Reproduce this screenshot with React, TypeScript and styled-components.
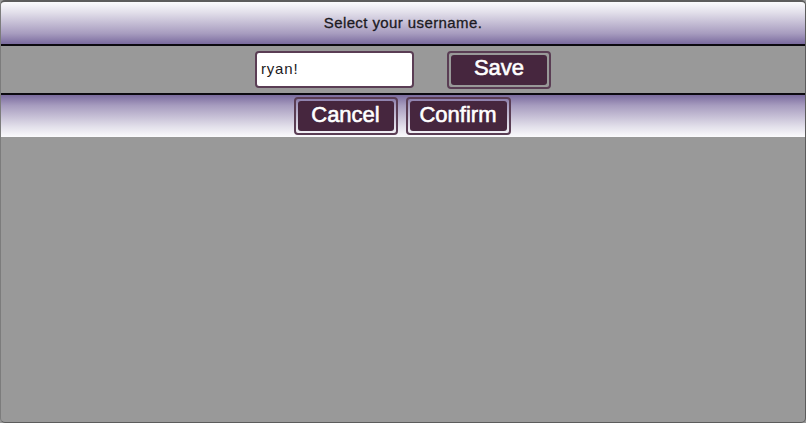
import React, { useState } from "react";
import styled, { createGlobalStyle } from "styled-components";

const GlobalStyle = createGlobalStyle`
  html, body {
    margin: 0;
    padding: 0;
    height: 100%;
    background: #999999;
  }
  #root {
    height: 100%;
  }
`;

const Screen = styled.div`
  box-sizing: border-box;
  height: 423px;
  display: flex;
  flex-direction: column;
  background: #999999;
  border: 1px solid #5c5c5c;
  border-top-width: 2px;
  border-left-color: #7c7c7c;
  border-radius: 5px;
  overflow: hidden;
  font-family: "Liberation Sans", sans-serif;
`;

const TitleBar = styled.div`
  height: 42px;
  padding-bottom: 2px;
  box-sizing: border-box;
  display: flex;
  align-items: center;
  justify-content: center;
  background: linear-gradient(#fbfbfd, #e2dfea 25%, #a79cbf 75%, #7a6b9e);
  color: #1c1a22;
  font-size: 15px;
  letter-spacing: 0.4px;
  -webkit-text-stroke: 0.3px #1c1a22;
`;

const EntryRow = styled.div`
  height: 47px;
  display: flex;
  align-items: center;
  justify-content: center;
  gap: 33px;
  border-top: 2px solid #0c0a10;
  border-bottom: 2px solid #0c0a10;
`;

const NameInput = styled.input`
  box-sizing: border-box;
  width: 159px;
  height: 37px;
  padding: 0 4px 2px;
  background: #ffffff;
  border: 2px solid #5a3d54;
  border-radius: 4px;
  outline: 0;
  color: #1c1a22;
  font-family: inherit;
  font-size: 15px;
  letter-spacing: 0.8px;
`;

const ActionBar = styled.div`
  height: 42px;
  padding-right: 2px;
  box-sizing: border-box;
  display: flex;
  align-items: center;
  justify-content: center;
  gap: 8px;
  background: linear-gradient(#7a6b9e, #a79cbf 25%, #e2dfea 75%, #fbfbfd);
`;

const Button = styled.button`
  box-sizing: border-box;
  width: ${(p) => p.$width}px;
  height: 38px;
  padding: 2px;
  background: transparent;
  border: 2px solid #5a3d54;
  border-radius: 4px;
`;

const ButtonFace = styled.span`
  box-sizing: border-box;
  height: 100%;
  padding-bottom: 3px;
  display: flex;
  align-items: center;
  justify-content: center;
  background: #46263e;
  border-radius: 3px;
  color: #ffffff;
  font-family: "Liberation Sans", sans-serif;
  font-size: 22px;
  font-weight: 400;
  -webkit-text-stroke: 0.6px #ffffff;
`;

const App: React.FC = () => {
  const [name, setName] = useState<string>("ryan!");

  return (
    <>
      <GlobalStyle />
      <Screen>
        <TitleBar>Select your username.</TitleBar>
        <EntryRow>
          <NameInput value={name} onChange={(e) => setName(e.target.value)} />
          <Button $width={104}>
            <ButtonFace>Save</ButtonFace>
          </Button>
        </EntryRow>
        <ActionBar>
          <Button $width={104}>
            <ButtonFace>Cancel</ButtonFace>
          </Button>
          <Button $width={105}>
            <ButtonFace>Confirm</ButtonFace>
          </Button>
        </ActionBar>
      </Screen>
    </>
  );
};

export default App;
